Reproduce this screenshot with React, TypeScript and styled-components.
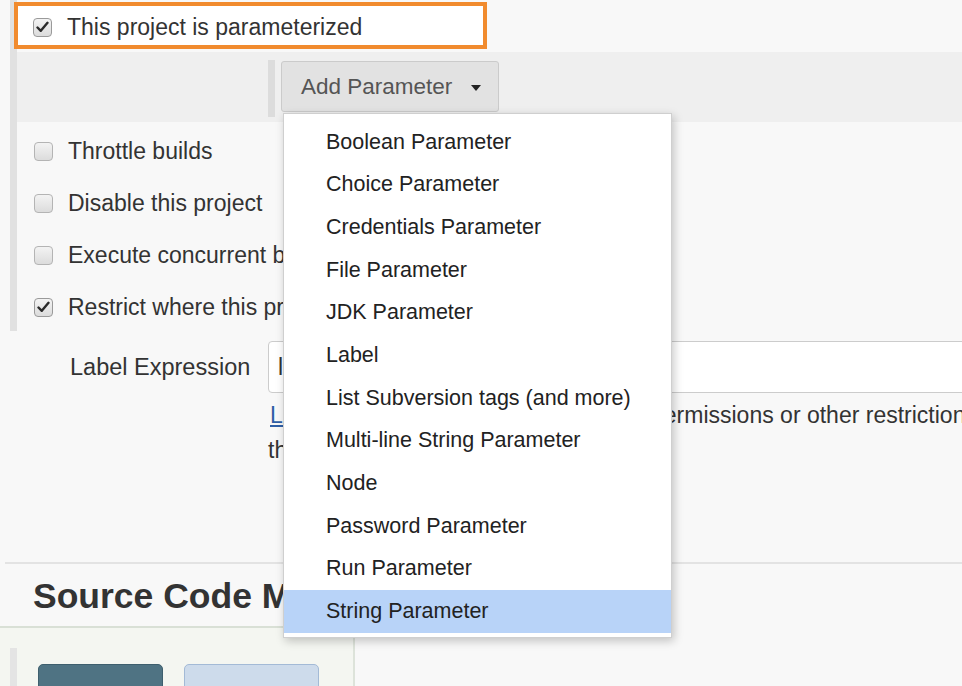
import React from "react";
import styled, { createGlobalStyle } from "styled-components";

const GlobalStyle = createGlobalStyle`
  html, body {
    margin: 0;
    padding: 0;
    background: #f8f8f8;
    overflow: hidden;
  }
  body {
    font-family: "Liberation Sans", Arial, sans-serif;
    color: #333;
  }
  #root {
    height: 686px;
    overflow: hidden;
  }
`;

const Page = styled.div`
  width: 962px;
  height: 686px;
  overflow: hidden;
  display: flex;
  flex-direction: column;
`;

const BarBlock = styled.div`
  margin-left: 10px;
  border-left: 7px solid #e1e1e1;
  padding-bottom: 1px;
  display: flex;
  flex-direction: column;
`;

const HighlightBox = styled.div`
  margin: 2px 0 0 -3px;
  width: 473px;
  height: 47px;
  box-sizing: border-box;
  border: 4px solid #f18b2e;
  background: #fff;
  display: flex;
  align-items: center;
  padding: 3px 0 0 15px;
  gap: 15px;
  font-size: 23px;
`;

const ParamBand = styled.div`
  margin-top: 3px;
  height: 70px;
  background: #efefef;
  padding: 8px 0 0 251px;
  box-sizing: border-box;
`;

const NestedBlock = styled.div`
  position: relative;
  height: 57px;
  box-sizing: border-box;
  border-left: 7px solid #dcdcdc;
  padding: 1px 0 0 6px;
`;

const AddButton = styled.button`
  height: 51px;
  width: 218px;
  box-sizing: border-box;
  border: 1px solid #cbcbcb;
  border-radius: 3px;
  background: #e2e2e2;
  color: #555;
  font-family: "Liberation Sans", Arial, sans-serif;
  font-size: 22.5px;
  display: flex;
  align-items: center;
  padding: 0 0 0 19px;
  gap: 19px;
`;

const Caret = styled.span`
  width: 0;
  height: 0;
  border-left: 5px solid transparent;
  border-right: 5px solid transparent;
  border-top: 6px solid #222;
  margin-top: 2px;
`;

const Menu = styled.ul`
  position: absolute;
  top: 53px;
  left: 8px;
  width: 389px;
  box-sizing: border-box;
  margin: 0;
  padding: 7px 0 4px;
  list-style: none;
  background: #fff;
  border: 1px solid #cfcfcf;
  box-shadow: 2px 3px 9px rgba(0, 0, 0, 0.22);
  z-index: 10;
`;

const MenuItem = styled.li<{ $active?: boolean }>`
  height: 42.67px;
  display: flex;
  align-items: center;
  padding-left: 42px;
  font-size: 21.5px;
  color: #222;
  background: ${(p) => (p.$active ? "#b8d3f8" : "transparent")};
`;

const CheckRow = styled.div`
  height: 52px;
  box-sizing: border-box;
  display: flex;
  align-items: center;
  padding: 6px 0 0 17px;
  gap: 15px;
  font-size: 23px;
  color: #333;
`;

const Box = styled.span<{ $checked?: boolean }>`
  width: 19px;
  height: 19px;
  box-sizing: border-box;
  border: 1px solid ${(p) => (p.$checked ? "#9a9a9a" : "#b4b4b4")};
  border-radius: 4px;
  background: linear-gradient(#f3f3f3, #dcdcdc);
  display: flex;
  align-items: center;
  justify-content: center;
  flex-shrink: 0;
`;

const LabelRow = styled.div`
  margin-top: 10px;
  height: 52px;
  display: flex;
  align-items: center;
`;

const FieldLabel = styled.div`
  width: 268px;
  box-sizing: border-box;
  padding-left: 70px;
  font-size: 23.5px;
  color: #333;
`;

const TextInput = styled.input`
  flex: 1;
  height: 52px;
  margin-right: -20px;
  box-sizing: border-box;
  border: 1px solid #cccccc;
  border-radius: 4px;
  background: #fff;
  padding-left: 9px;
  font-family: "Liberation Sans", Arial, sans-serif;
  font-size: 23px;
  color: #333;
  outline: none;
`;

const HelpText = styled.div`
  margin-top: 5px;
  padding-left: 270px;
  font-size: 23px;
  line-height: 35px;
  white-space: nowrap;
  color: #333;

  a {
    color: #2f5fa6;
    text-decoration: underline;
  }

  div:last-child {
    margin-left: -2px;
  }
`;

const Divider = styled.div`
  margin: 94px 0 0 5px;
  border-top: 2px solid #e3e3e3;
`;

const SectionTitle = styled.h2`
  margin: 0;
  height: 62px;
  line-height: 64px;
  padding-left: 33px;
  font-size: 35.5px;
  font-weight: bold;
  color: #333;
  white-space: nowrap;
`;

const ScmPanel = styled.div`
  width: 355px;
  flex: 1;
  box-sizing: border-box;
  border-top: 2px solid #d9e0d6;
  border-right: 2px solid #dde3da;
  background: #f4f6f1;
  padding-top: 20px;
`;

const ScmInner = styled.div`
  margin-left: 10px;
  height: 100%;
  border-left: 7px solid #e4e4e4;
  padding: 16px 0 0 21px;
  display: flex;
  gap: 21px;
`;

const ScmButton = styled.div<{ $primary?: boolean }>`
  width: ${(p) => (p.$primary ? "125px" : "135px")};
  height: 44px;
  box-sizing: border-box;
  border-radius: 5px;
  border: 1px solid ${(p) => (p.$primary ? "#3e5f6e" : "#a3bad6")};
  background: ${(p) => (p.$primary ? "#4f7383" : "#cddbeb")};
`;

const Check = () => (
  <svg width="13" height="12" viewBox="0 0 13 12">
    <path
      d="M1.5 6.5 L4.8 9.8 L11.5 1.8"
      fill="none"
      stroke="#2a2a2a"
      strokeWidth="2.4"
      strokeLinecap="round"
      strokeLinejoin="round"
    />
  </svg>
);

const CheckBox: React.FC<{ checked?: boolean }> = ({ checked }) => (
  <Box $checked={checked}>{checked && <Check />}</Box>
);

const parameterTypes = [
  "Boolean Parameter",
  "Choice Parameter",
  "Credentials Parameter",
  "File Parameter",
  "JDK Parameter",
  "Label",
  "List Subversion tags (and more)",
  "Multi-line String Parameter",
  "Node",
  "Password Parameter",
  "Run Parameter",
  "String Parameter",
];

const options = [
  { label: "Throttle builds", checked: false },
  { label: "Disable this project", checked: false },
  { label: "Execute concurrent builds if necessary", checked: false },
  { label: "Restrict where this project can be run", checked: true },
];

const App: React.FC = () => {
  const active = "String Parameter";

  return (
    <>
      <GlobalStyle />
      <Page>
        <BarBlock>
          <HighlightBox>
            <CheckBox checked />
            <span>This project is parameterized</span>
          </HighlightBox>
          <ParamBand>
            <NestedBlock>
              <AddButton>
                Add Parameter
                <Caret />
              </AddButton>
              <Menu>
                {parameterTypes.map((name) => (
                  <MenuItem key={name} $active={name === active}>
                    {name}
                  </MenuItem>
                ))}
              </Menu>
            </NestedBlock>
          </ParamBand>
          {options.map((o) => (
            <CheckRow key={o.label}>
              <CheckBox checked={o.checked} />
              <span>{o.label}</span>
            </CheckRow>
          ))}
        </BarBlock>
        <LabelRow>
          <FieldLabel>Label Expression</FieldLabel>
          <TextInput defaultValue="linux-64" />
        </LabelRow>
        <HelpText>
          <div>
            <a href="#">Label linux-64</a> is serviced by 1 node. Permissions or
            other restrictions provided by plugins may prevent
          </div>
          <div>this job from running on those nodes.</div>
        </HelpText>
        <Divider />
        <SectionTitle>Source Code Management</SectionTitle>
        <ScmPanel>
          <ScmInner>
            <ScmButton $primary />
            <ScmButton />
          </ScmInner>
        </ScmPanel>
      </Page>
    </>
  );
};

export default App;
